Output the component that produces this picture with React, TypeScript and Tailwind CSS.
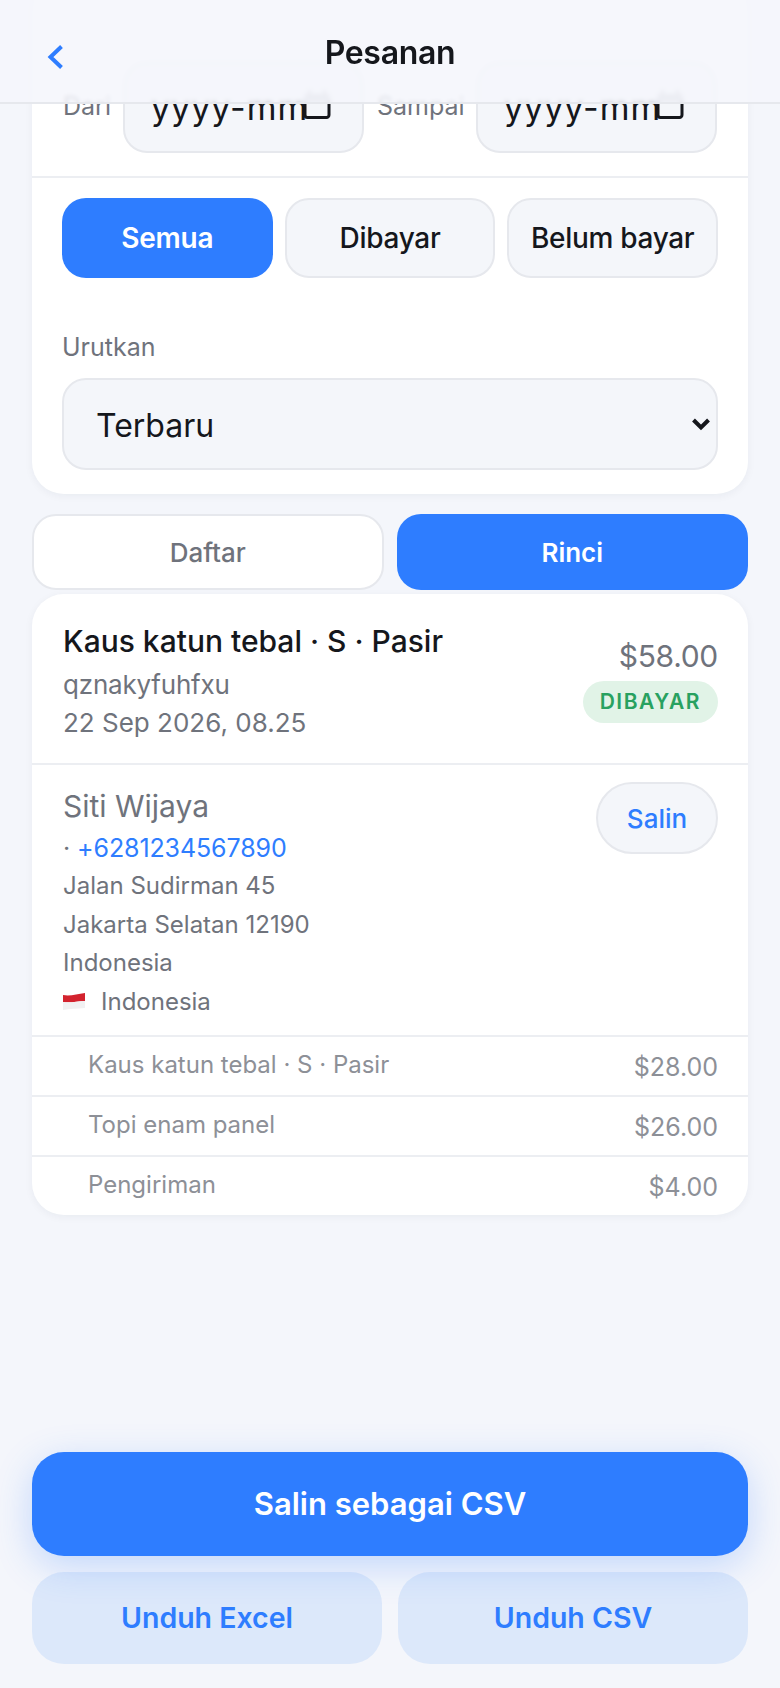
const font = "font-['Inter','Liberation_Sans',sans-serif]";

function CalendarIcon() {
  return (
    <svg width="28" height="29" viewBox="0 0 28 29" className="-mt-[7px] shrink-0">
      <rect x="5" y="0" width="3" height="5" fill="#b9bcc4" />
      <rect x="20" y="0" width="3" height="5" fill="#b9bcc4" />
      <path d="M1 8a4 4 0 0 1 4-4h18a4 4 0 0 1 4 4v4H1z" fill="#b9bcc4" />
      <path d="M2 12v13a2.500 2.500 0 0 0 2.500 2.500h19A2.500 2.500 0 0 0 26 25V12" fill="none" stroke="#15171c" strokeWidth="3" />
    </svg>
  );
}

function Flag() {
  return (
    <svg width="22" height="17" viewBox="0 0 22 17" className="shrink-0">
      <path d="M0 2c7 1.500 14-1 22-2v8C14 8.500 7 10 0 9z" fill="#d3232e" />
      <path d="M0 9c7 1 14-.500 22-1v7c-8 .500-15 1-22 2z" fill="#f1f1f2" />
    </svg>
  );
}

function DateField({ label, labelWidth }: { label: string; labelWidth: string }) {
  return (
    <div className="flex items-start gap-[12px]">
      <span className={`${labelWidth} shrink-0 pt-[29px] text-[25px] leading-[32px] text-[#6f737c]`}>{label}</span>
      <div className="flex h-[92px] w-[241px] shrink-0 items-center gap-[5px] rounded-[24px] border-2 border-[#e6e8ed] bg-[#f4f6fa] pl-[26px] pt-[2px]">
        <span className="w-[147px] shrink-0 text-[34px] leading-[40px] tracking-[1px] whitespace-nowrap text-[#15171c]">yyyy-mm</span>
        <CalendarIcon />
      </div>
    </div>
  );
}

function FilterButton({ label, active }: { label: string; active?: boolean }) {
  return (
    <button
      className={
        active
          ? "h-[80px] rounded-[24px] bg-[#2e7dff] text-[28px] font-semibold tracking-[-0.2px] text-white"
          : "h-[80px] rounded-[24px] border-2 border-[#e6e8ed] bg-[#f4f6fa] text-[28px] font-medium tracking-[-0.3px] text-[#15171c]"
      }
    >
      {label}
    </button>
  );
}

function LineItem({ name, price }: { name: string; price: string }) {
  return (
    <div className="flex h-[60px] items-center justify-between border-t-2 border-[#eceef2] pt-[2px] pr-[30px] pl-[56px] text-[#8d9097]">
      <span className="-mt-1 text-[24px] leading-[32px]">{name}</span>
      <span className="text-[25px] leading-[32px]">{price}</span>
    </div>
  );
}

export default function App() {
  return (
    <div className={`${font} relative flex h-[1688px] w-[780px] flex-col overflow-hidden bg-[#f4f6fb]`}>
      {/* HEADER */}
      <header className="absolute inset-x-0 top-0 z-10 flex h-[104px] items-center justify-center border-b-2 border-[#e6e8ed] bg-[#f4f6fb]/85 pt-[3px] backdrop-blur-[2px]">
        <svg width="20" height="26" viewBox="0 0 20 26" className="absolute top-[44px] left-[46px]">
          <path d="M15.500 2.500 4.500 13l11 10.500" fill="none" stroke="#2e7dff" strokeWidth="4" />
        </svg>
        <h1 className="text-[32px] font-semibold tracking-[-0.3px] text-[#15171c]">Pesanan</h1>
      </header>

      {/* FILTER CARD */}
      <section className="mx-[32px] mt-[-20px] rounded-[32px] bg-white shadow-[0_2px_8px_rgba(20,30,60,0.05)]">
        <div className="flex gap-[13px] border-b-2 border-[#eceef2] px-[31px] pt-[81px] pb-[23px]">
          <DateField label="Dari" labelWidth="w-[48px]" />
          <DateField label="Sampai" labelWidth="w-[87px]" />
        </div>
        <div className="grid grid-cols-3 gap-[12px] px-[30px] pt-[20px]">
          <FilterButton label="Semua" active />
          <FilterButton label="Dibayar" />
          <FilterButton label="Belum bayar" />
        </div>
        <div className="px-[30px] pt-[52px] pb-[24px]">
          <p className="text-[25px] leading-[34px] text-[#6f737c]">Urutkan</p>
          <div className="relative mt-[14px]">
            <select className="h-[92px] w-full appearance-none rounded-[24px] border-2 border-[#e6e8ed] bg-[#f4f6fa] pt-[3px] pl-[32px] text-[32px] text-[#15171c]">
              <option>Terbaru</option>
            </select>
            <svg width="20" height="14" viewBox="0 0 20 14" className="pointer-events-none absolute top-[39px] right-[7px]">
              <path d="M2.500 3 10 10.500 17.500 3" fill="none" stroke="#15171c" strokeWidth="4" />
            </svg>
          </div>
        </div>
      </section>

      {/* VIEW SWITCH */}
      <div className="mx-[32px] mt-[20px] grid grid-cols-2 gap-[13px]">
        <button className="h-[76px] rounded-[24px] border-2 border-[#e6e8ed] bg-white text-[26px] font-medium text-[#6f737c]">Daftar</button>
        <button className="h-[76px] rounded-[24px] bg-[#2e7dff] text-[26px] font-semibold text-white">Rinci</button>
      </div>

      {/* ORDER CARD */}
      <section className="mx-[32px] mt-[4px] overflow-hidden rounded-[32px] bg-white shadow-[0_2px_8px_rgba(20,30,60,0.05)]">
        <div className="flex items-center justify-between pt-[27px] pr-[30px] pb-[22px] pl-[31px]">
          <div>
            <p className="text-[30px] leading-[40px] font-medium text-[#15171c]">Kaus katun tebal · S · Pasir</p>
            <p className="mt-[7px] text-[26px] leading-[34px] tracking-[-0.2px] text-[#6f737c]">qznakyfuhfxu</p>
            <p className="mt-[3px] text-[26px] leading-[36px] text-[#6f737c]">22 Sep 2026, 08.25</p>
          </div>
          <div className="-mt-[2px] flex flex-col items-end">
            <p className="text-[30px] leading-[38px] tracking-[-0.3px] text-[#6f737c]">$58.00</p>
            <span className="mt-[6px] flex h-[42px] items-center rounded-full bg-[#e1f3e7] px-[17px] text-[21px] font-semibold tracking-[1.500px] text-[#28a160]">DIBAYAR</span>
          </div>
        </div>

        <div className="flex items-start justify-between border-t-2 border-[#eceef2] pt-[17px] pr-[30px] pb-[14px] pl-[31px]">
          <div className="pt-[2px] text-[24px] leading-[38.400px] text-[#6f737c]">
            <p className="text-[30px] leading-[44px]">Siti Wijaya</p>
            <p className="mt-[1px] text-[25px] tracking-[-0.1px]">
              · <span className="text-[#2e7dff]">+6281234567890</span>
            </p>
            <p>Jalan Sudirman 45</p>
            <p>Jakarta Selatan 12190</p>
            <p>Indonesia</p>
            <p className="flex items-center gap-[16px]">
              <Flag />
              Indonesia
            </p>
          </div>
          <button className="h-[72px] w-[122px] rounded-[36px] border-2 border-[#e6e8ed] bg-[#f4f6fa] text-[26px] font-medium text-[#2e7dff]">Salin</button>
        </div>

        <LineItem name="Kaus katun tebal · S · Pasir" price="$28.00" />
        <LineItem name="Topi enam panel" price="$26.00" />
        <LineItem name="Pengiriman" price="$4.00" />
      </section>

      {/* BOTTOM ACTIONS */}
      <footer className="mt-auto flex flex-col gap-[16px] px-[32px] pb-[24px]">
        <button className="relative z-[1] h-[104px] rounded-[32px] bg-[#2e7dff] text-[31px] font-semibold text-white shadow-[0_10px_36px_rgba(46,125,255,0.25)]">Salin sebagai CSV</button>
        <div className="flex gap-[16px]">
          <button className="h-[92px] flex-1 rounded-[32px] bg-[#dce8fa] text-[28.500px] font-semibold text-[#2e7dff]">Unduh Excel</button>
          <button className="h-[92px] flex-1 rounded-[32px] bg-[#dce8fa] text-[28.500px] font-semibold text-[#2e7dff]">Unduh CSV</button>
        </div>
      </footer>
    </div>
  );
}
